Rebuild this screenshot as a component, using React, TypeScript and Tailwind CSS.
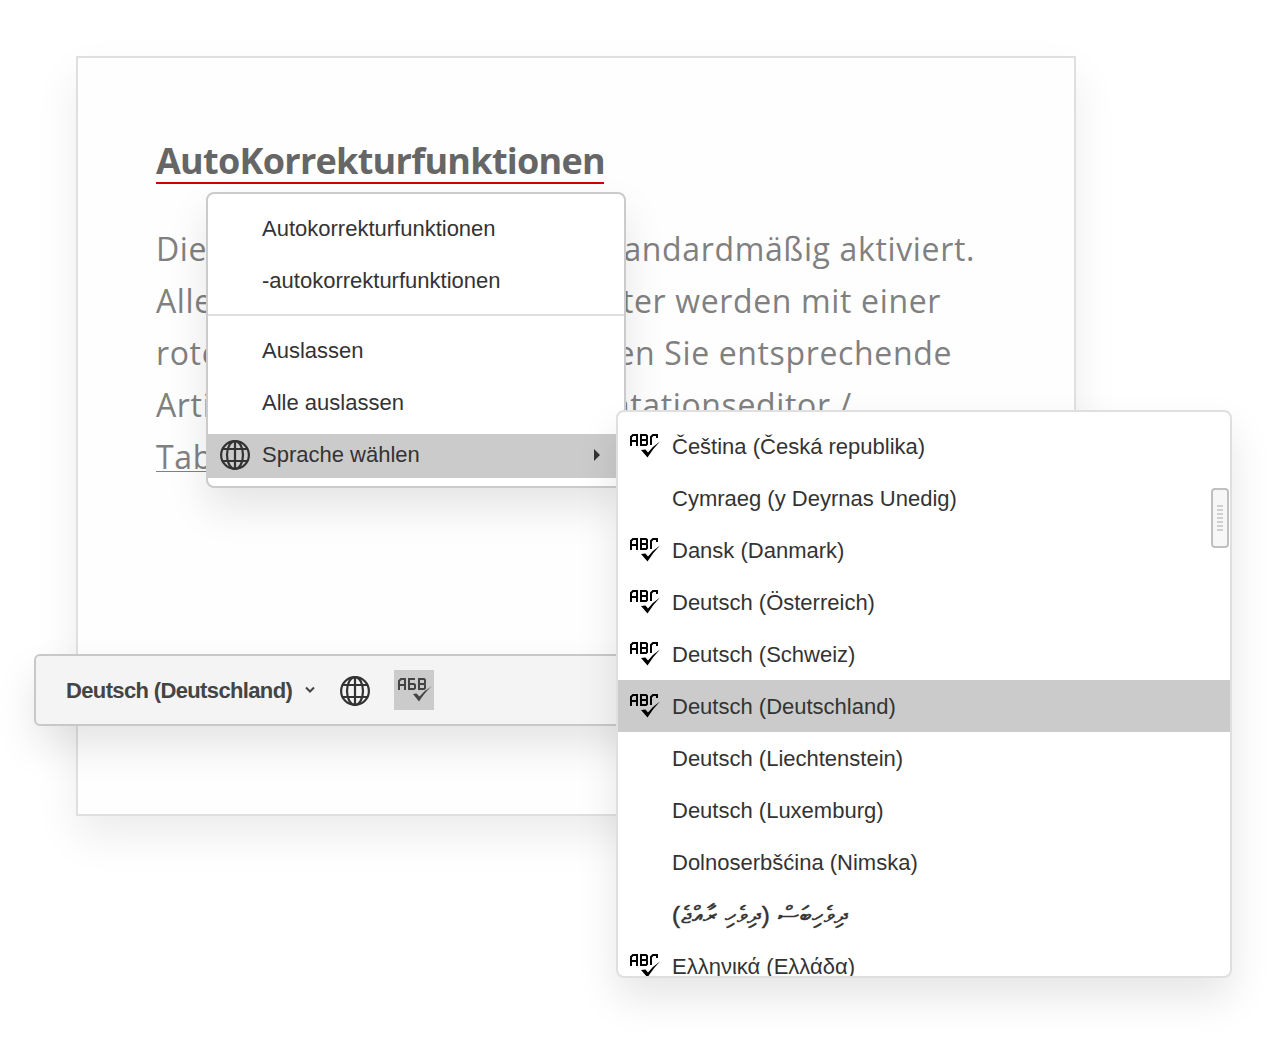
import React from "react";

function Globe() {
  return (
    <svg width="30" height="30" viewBox="0 0 30 30" fill="none" stroke="#333" strokeWidth="2.2">
      <circle cx="15" cy="15" r="13.9" />
      <ellipse cx="15" cy="15" rx="8" ry="13.9" />
      <path d="M15 1v28M2.5 9h25M2.5 21h25" />
    </svg>
  );
}

function SpellCheck() {
  return (
    <svg width="30" height="26" viewBox="0 0 30 26" fill="none" stroke="#000" strokeWidth="2">
      <path d="M1 14V5L3 3H7V14M1 9H7M11 3H16L17 4V7L16 8H11ZM11 8V13H16L17 12V9L16 8M21 13V5L23 3H27V6" />
      <path d="M11 18L15.5 17.5L18 20.5Q23 14 30 9.5Q23 16.500 17.5 25.500Z" fill="#000" stroke="none" />
    </svg>
  );
}

function SpellCheckCyrillic() {
  return (
    <svg width="34" height="24" viewBox="0 0 34 24" fill="none" stroke="#444" strokeWidth="2">
      <path d="M1 12V3L3 1H7V12M1 7H7M17 1H11V11H16L17 10V7L16 6H11M21 1H26L27 2V5L26 6H21ZM21 6V11H26L27 10V7L26 6" />
      <path d="M15 16L18.500 15.500L21.500 18.500Q27 12 34 8Q27 14 21 23.500Z" fill="#444" stroke="none" />
    </svg>
  );
}

const lines = [
  { left: "Die", right: "tandardmäßig aktiviert.", width: "w-[819px]" },
  { left: "Alle", right: "ter werden mit einer", width: "w-[785px]" },
  { left: "rote", right: "en Sie entsprechende", width: "w-[796px]" },
  { left: "Artik", right: "ntationseditor /", width: "w-[696px]" },
];

const languages = [
  { name: "Čeština (Česká republika)", check: true },
  { name: "Cymraeg (y Deyrnas Unedig)", check: false },
  { name: "Dansk (Danmark)", check: true },
  { name: "Deutsch (Österreich)", check: true },
  { name: "Deutsch (Schweiz)", check: true },
  { name: "Deutsch (Deutschland)", check: true, active: true },
  { name: "Deutsch (Liechtenstein)", check: false },
  { name: "Deutsch (Luxemburg)", check: false },
  { name: "Dolnoserbšćina (Nimska)", check: false },
  { name: "ދިވެހިބަސް (ދިވެހި ރާއްޖެ)", check: false, rtl: true },
  { name: "Ελληνικά (Ελλάδα)", check: true },
];

export default function App() {
  return (
    <div className="relative h-[1040px] w-[1280px] overflow-hidden bg-white pl-[76px] pt-[56px] font-['Liberation_Sans',Arial,sans-serif] text-[22px] text-[#333]">
      <main className="h-[760px] w-[1000px] border-2 border-[#dfdfdf] bg-[#fefefe] pl-[78px] pt-[78px] font-['Open_Sans',sans-serif] shadow-[0_20px_40px_rgba(0,0,0,0.08)]">
        <h1 className="h-12 w-[448px] whitespace-nowrap border-b-2 border-[#cc0000] text-[36px] font-bold leading-[50px] tracking-[-0.72px] text-[#666]">
          AutoKorrekturfunktionen
        </h1>
        <div className="mt-[39px] text-[32px] leading-[52px] tracking-[0.64px] text-[#808080]">
          {lines.map((line) => (
            <p key={line.left} className={`flex justify-between whitespace-nowrap ${line.width}`}>
              <span>{line.left}</span>
              <span>{line.right}</span>
            </p>
          ))}
          <p className="underline decoration-1 underline-offset-2 [text-decoration-skip-ink:none]">Tab</p>
        </div>
      </main>

      <div className="absolute left-[34px] top-[654px] flex h-[72px] w-[640px] items-center rounded-md border-2 border-[#c8c8c8] bg-[#f4f4f4] pl-[30px] text-[#444] shadow-[0_20px_40px_rgba(0,0,0,0.1)]">
        <span className="w-[227px] whitespace-nowrap font-bold tracking-[-0.64px]">Deutsch (Deutschland)</span>
        <svg className="ml-[12px]" width="10" height="8" viewBox="0 0 10 8" fill="none" stroke="#444" strokeWidth="2">
          <path d="M1 1.5L5 5.5L9 1.5" />
        </svg>
        <span className="ml-[25px] mt-0.5"><Globe /></span>
        <span className="ml-[24px] flex size-10 bg-[#cbcbcb] pl-1 pt-2"><SpellCheckCyrillic /></span>
      </div>

      <div className="absolute left-[206px] top-[192px] h-[296px] w-[420px] rounded-lg border-2 border-[#cbcbcb] bg-white pt-2 shadow-[0_20px_40px_rgba(0,0,0,0.1)]">
        <div className="flex h-[52px] items-center pl-[54px]">Autokorrekturfunktionen</div>
        <div className="flex h-[52px] items-center pl-[54px]">-autokorrekturfunktionen</div>
        <div className="mb-2 mt-2 h-0.5 bg-[#dfdfdf]" />
        <div className="flex h-[52px] items-center pl-[54px]">Auslassen</div>
        <div className="flex h-[52px] items-center pl-[54px]">Alle auslassen</div>
        <div className="mt-1.5 flex h-11 items-center bg-[#cbcbcb] pb-0.5 pl-3">
          <Globe />
          <span className="ml-3 w-[332px] pb-px">Sprache wählen</span>
          <svg width="6" height="12" viewBox="0 0 6 12" fill="#333"><path d="M0 0L6 6L0 12Z" /></svg>
        </div>
      </div>

      <div className="absolute left-[616px] top-[410px] h-[568px] w-[616px] overflow-hidden rounded-lg border-2 border-[#dfdfdf] bg-white pt-2 shadow-[0_20px_40px_rgba(0,0,0,0.1)]">
        {languages.map((language) => (
          <div key={language.name} className={`flex h-[52px] items-center pl-3 ${language.active ? "bg-[#cbcbcb]" : ""}`}>
            <span className="mt-[-3px] w-[42px]">{language.check && <SpellCheck />}</span>
            <span
              dir={language.rtl ? "rtl" : "ltr"}
              className={language.rtl ? "whitespace-nowrap pt-0.5 text-[24px] tracking-[0.75px] [-webkit-text-stroke:0.5px_#333]" : "whitespace-nowrap"}
            >
              {language.name}
            </span>
          </div>
        ))}
        <div className="absolute right-px top-[76px] flex h-[60px] w-[18px] flex-col items-center justify-center gap-0.5 rounded border-2 border-[#c0c0c0] bg-[#f7f7f7]">
          {[0, 1, 2, 3, 4, 5, 6].map((bar) => (
            <div key={bar} className="h-0.5 w-1.5 bg-[#cfcfcf]" />
          ))}
        </div>
      </div>
    </div>
  );
}
